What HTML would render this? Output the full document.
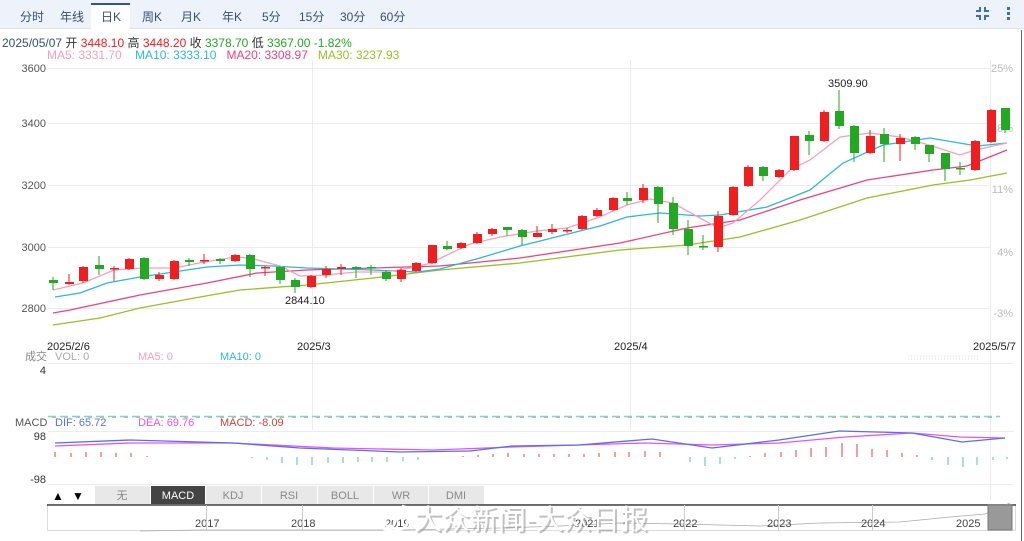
<!DOCTYPE html>
<html><head><meta charset="utf-8"><style>
*{margin:0;padding:0;box-sizing:border-box}
body{width:1024px;height:541px;overflow:hidden;background:#fff;font-family:"Liberation Sans","Noto Sans CJK SC",sans-serif;position:relative}
.bar{position:absolute;left:0;top:0;width:1024px;height:29px;background:#eef3fb;border-bottom:1px solid #dde4ee}
.t{position:absolute;top:8px;font-size:12px;color:#34507a}
.act{position:absolute;left:91px;top:3px;width:39px;height:27px;background:#fff;border-top:2px solid #2f5597}
.tx{position:absolute;font-size:12px;white-space:nowrap}
svg{position:absolute;left:0;top:0}
</style></head><body>
<div class="bar"></div>
<div class="act"></div>
<div class="t" style="left:20px">分时</div>
<div class="t" style="left:60px">年线</div>
<div class="t" style="left:101px">日K</div>
<div class="t" style="left:142px">周K</div>
<div class="t" style="left:181px">月K</div>
<div class="t" style="left:222px">年K</div>
<div class="t" style="left:262px">5分</div>
<div class="t" style="left:299px">15分</div>
<div class="t" style="left:340px">30分</div>
<div class="t" style="left:380px">60分</div>

<div class="tx" style="left:2px;top:34px;color:#34507a">2025/05/07 <span style="color:#333">开</span> <span style="color:#f01e1e">3448.10</span> <span style="color:#333">高</span> <span style="color:#f01e1e">3448.20</span> <span style="color:#333">收</span> <span style="color:#22a822">3378.70</span> <span style="color:#333">低</span> <span style="color:#22a822">3367.00 -1.82%</span></div>
<div class="tx" style="left:47px;top:48px;color:#f7a0b8">MA5: 3331.70 &nbsp; &nbsp;<span style="color:#2cb8dc">MA10: 3333.10</span> &nbsp; <span style="color:#f0437a">MA20: 3308.97</span> &nbsp; <span style="color:#9cbf22">MA30: 3237.93</span></div>

<svg width="1024" height="541" font-family="Liberation Sans, sans-serif">
<!-- top-right icons -->
<g fill="none" stroke="#3a6fc0" stroke-width="2">
<path d="M976 11 H980 V7"/><path d="M985 7 V11 H989"/><path d="M976 16 H980 V20"/><path d="M985 20 V16 H989"/>
</g>
<g fill="#3a6fc0"><rect x="1007" y="7" width="3" height="3"/><rect x="1007" y="12" width="3" height="3"/><rect x="1007" y="17" width="3" height="3"/></g>
<g stroke="#ececec" stroke-width="1">
<line x1="48" y1="68.5" x2="990" y2="68.5"/><line x1="48" y1="123.5" x2="990" y2="123.5"/><line x1="48" y1="185.5" x2="990" y2="185.5"/><line x1="48" y1="247.5" x2="990" y2="247.5"/><line x1="48" y1="308.5" x2="990" y2="308.5"/>
<line x1="312.5" y1="60" x2="312.5" y2="430"/><line x1="630.5" y1="60" x2="630.5" y2="430"/><line x1="990.5" y1="60" x2="990.5" y2="500"/>
<line x1="48" y1="363.5" x2="1014" y2="363.5"/><line x1="48" y1="431.5" x2="1014" y2="431.5"/><line x1="48" y1="484.5" x2="1014" y2="484.5"/>
</g>
<line x1="1021.5" y1="30" x2="1021.5" y2="541" stroke="#666"/>
<g font-size="11" fill="#555" text-anchor="end">
<text x="46" y="72">3600</text><text x="46" y="127">3400</text><text x="46" y="189">3200</text><text x="46" y="251">3000</text><text x="46" y="312">2800</text>
</g>
<g font-size="11" fill="#bbb" text-anchor="end">
<text x="1013" y="72">25%</text><text x="1013" y="132">18%</text><text x="1013" y="193">11%</text><text x="1013" y="256">4%</text><text x="1013" y="317">-3%</text>
</g>
<g font-size="11" fill="#222">
<text x="47" y="350">2025/2/6</text><text x="297" y="350">2025/3</text><text x="614" y="350">2025/4</text><text x="973" y="350">2025/5/7</text>
<text x="285" y="304">2844.10</text><text x="828" y="87">3509.90</text>
</g>
<g fill="none" stroke-width="1.3">
<polyline stroke="#9cbf22" points="53,325 100,318 140,308 200,297 240,290 307,285 373,278 440,270 520,263 620,250 687,245 740,237 800,220 867,198 933,185 970,180 1007,173"/>
<polyline stroke="#f0437a" points="53,313 70,310 140,295 207,283 257,273 307,270 373,268 440,266 520,258 620,243 687,228 740,220 800,200 867,180 933,170 967,166 1007,150"/>
<polyline stroke="#2cb8dc" points="55,297 80,293 107,283 140,277 207,267 240,265 273,266 307,268 373,270 417,272 440,269 480,258 520,246 560,236 600,226 627,217 660,213 700,216 720,215 767,207 810,190 843,163 883,145 930,138 977,146 1007,143"/>
<polyline stroke="#f7a0b8" points="53,290 83,283 114,270 144,268 174,268 204,262 235,257 250,258 280,266 300,276 326,275 356,272 386,272 416,267 431,263 447,255 470,244 500,237 537,231 567,228 597,218 627,205 650,199 673,203 700,218 718,228 733,223 760,200 790,170 810,160 840,137 870,133 900,137 929,145 960,155 975,150 1007,143"/>
</g>
<g stroke-width="1">
<line x1="53" y1="277" x2="53" y2="290" stroke="#22a822"/><rect x="49" y="280" width="9" height="3" fill="#22a822"/>
<line x1="69" y1="274" x2="69" y2="285" stroke="#f01e1e"/><rect x="65" y="282" width="9" height="2" fill="#f01e1e"/>
<line x1="83" y1="266" x2="83" y2="283" stroke="#f01e1e"/><rect x="79" y="267" width="9" height="14" fill="#f01e1e"/>
<line x1="99" y1="256" x2="99" y2="275" stroke="#22a822"/><rect x="95" y="265" width="9" height="4" fill="#22a822"/>
<line x1="114" y1="266" x2="114" y2="281" stroke="#f01e1e"/><rect x="110" y="268" width="9" height="1.5" fill="#f01e1e"/>
<line x1="129" y1="258" x2="129" y2="270" stroke="#f01e1e"/><rect x="125" y="259" width="9" height="10" fill="#f01e1e"/>
<line x1="144" y1="257" x2="144" y2="280" stroke="#22a822"/><rect x="140" y="258" width="9" height="21" fill="#22a822"/>
<line x1="159" y1="272" x2="159" y2="281" stroke="#f01e1e"/><rect x="155" y="275" width="9" height="4" fill="#f01e1e"/>
<line x1="174" y1="260" x2="174" y2="280" stroke="#f01e1e"/><rect x="170" y="261" width="9" height="18" fill="#f01e1e"/>
<line x1="189" y1="258" x2="189" y2="266" stroke="#22a822"/><rect x="185" y="260" width="9" height="2" fill="#22a822"/>
<line x1="204" y1="254" x2="204" y2="264" stroke="#f01e1e"/><rect x="200" y="260" width="9" height="1.5" fill="#f01e1e"/>
<line x1="220" y1="258" x2="220" y2="264" stroke="#22a822"/><rect x="216" y="259" width="9" height="2" fill="#22a822"/>
<line x1="235" y1="254" x2="235" y2="262" stroke="#f01e1e"/><rect x="231" y="255" width="9" height="6" fill="#f01e1e"/>
<line x1="250" y1="254" x2="250" y2="277" stroke="#22a822"/><rect x="246" y="255" width="9" height="14" fill="#22a822"/>
<line x1="265" y1="266" x2="265" y2="276" stroke="#f01e1e"/><rect x="261" y="267" width="9" height="1.5" fill="#f01e1e"/>
<line x1="280" y1="266" x2="280" y2="284" stroke="#22a822"/><rect x="276" y="267" width="9" height="13" fill="#22a822"/>
<line x1="295" y1="278" x2="295" y2="293" stroke="#22a822"/><rect x="291" y="280" width="9" height="7" fill="#22a822"/>
<line x1="311" y1="275" x2="311" y2="288" stroke="#f01e1e"/><rect x="307" y="276" width="9" height="11" fill="#f01e1e"/>
<line x1="326" y1="266" x2="326" y2="278" stroke="#f01e1e"/><rect x="322" y="269" width="9" height="6" fill="#f01e1e"/>
<line x1="341" y1="264" x2="341" y2="275" stroke="#f01e1e"/><rect x="337" y="267" width="9" height="2" fill="#f01e1e"/>
<line x1="356" y1="266" x2="356" y2="278" stroke="#22a822"/><rect x="352" y="267" width="9" height="2" fill="#22a822"/>
<line x1="371" y1="265" x2="371" y2="275" stroke="#22a822"/><rect x="367" y="267" width="9" height="1.5" fill="#22a822"/>
<line x1="386" y1="270" x2="386" y2="281" stroke="#22a822"/><rect x="382" y="272" width="9" height="7" fill="#22a822"/>
<line x1="401" y1="268" x2="401" y2="282" stroke="#f01e1e"/><rect x="397" y="270" width="9" height="9" fill="#f01e1e"/>
<line x1="416" y1="262" x2="416" y2="272" stroke="#f01e1e"/><rect x="412" y="263" width="9" height="8" fill="#f01e1e"/>
<line x1="432" y1="245" x2="432" y2="264" stroke="#f01e1e"/><rect x="428" y="245" width="9" height="18" fill="#f01e1e"/>
<line x1="447" y1="241" x2="447" y2="250" stroke="#22a822"/><rect x="443" y="246" width="9" height="3" fill="#22a822"/>
<line x1="461" y1="242" x2="461" y2="249" stroke="#f01e1e"/><rect x="457" y="243" width="9" height="5" fill="#f01e1e"/>
<line x1="477" y1="232" x2="477" y2="244" stroke="#f01e1e"/><rect x="473" y="234" width="9" height="9" fill="#f01e1e"/>
<line x1="492" y1="228" x2="492" y2="236" stroke="#f01e1e"/><rect x="488" y="229" width="9" height="5" fill="#f01e1e"/>
<line x1="507" y1="227" x2="507" y2="236" stroke="#22a822"/><rect x="503" y="227" width="9" height="3" fill="#22a822"/>
<line x1="522" y1="229" x2="522" y2="245" stroke="#22a822"/><rect x="518" y="230" width="9" height="7" fill="#22a822"/>
<line x1="537" y1="226" x2="537" y2="237" stroke="#f01e1e"/><rect x="533" y="233" width="9" height="4" fill="#f01e1e"/>
<line x1="552" y1="224" x2="552" y2="234" stroke="#f01e1e"/><rect x="548" y="229" width="9" height="3" fill="#f01e1e"/>
<line x1="567" y1="228" x2="567" y2="233" stroke="#f01e1e"/><rect x="563" y="230" width="9" height="1.5" fill="#f01e1e"/>
<line x1="582" y1="215" x2="582" y2="230" stroke="#f01e1e"/><rect x="578" y="216" width="9" height="13" fill="#f01e1e"/>
<line x1="597" y1="208" x2="597" y2="217" stroke="#f01e1e"/><rect x="593" y="210" width="9" height="6" fill="#f01e1e"/>
<line x1="613" y1="197" x2="613" y2="211" stroke="#f01e1e"/><rect x="609" y="198" width="9" height="12" fill="#f01e1e"/>
<line x1="627" y1="192" x2="627" y2="205" stroke="#22a822"/><rect x="623" y="198" width="9" height="3" fill="#22a822"/>
<line x1="643" y1="184" x2="643" y2="203" stroke="#f01e1e"/><rect x="639" y="188" width="9" height="12" fill="#f01e1e"/>
<line x1="658" y1="186" x2="658" y2="223" stroke="#22a822"/><rect x="654" y="187" width="9" height="17" fill="#22a822"/>
<line x1="673" y1="197" x2="673" y2="235" stroke="#22a822"/><rect x="669" y="203" width="9" height="26" fill="#22a822"/>
<line x1="688" y1="220" x2="688" y2="255" stroke="#22a822"/><rect x="684" y="229" width="9" height="17" fill="#22a822"/>
<line x1="703" y1="235" x2="703" y2="250" stroke="#22a822"/><rect x="699" y="246" width="9" height="1.5" fill="#22a822"/>
<line x1="718" y1="211" x2="718" y2="252" stroke="#f01e1e"/><rect x="714" y="216" width="9" height="31" fill="#f01e1e"/>
<line x1="733" y1="186" x2="733" y2="216" stroke="#f01e1e"/><rect x="729" y="187" width="9" height="28" fill="#f01e1e"/>
<line x1="748" y1="165" x2="748" y2="187" stroke="#f01e1e"/><rect x="744" y="167" width="9" height="19" fill="#f01e1e"/>
<line x1="763" y1="166" x2="763" y2="181" stroke="#22a822"/><rect x="759" y="167" width="9" height="9" fill="#22a822"/>
<line x1="779" y1="169" x2="779" y2="178" stroke="#f01e1e"/><rect x="775" y="170" width="9" height="7" fill="#f01e1e"/>
<line x1="794" y1="136" x2="794" y2="171" stroke="#f01e1e"/><rect x="790" y="136" width="9" height="34" fill="#f01e1e"/>
<line x1="809" y1="131" x2="809" y2="155" stroke="#22a822"/><rect x="805" y="135" width="9" height="6" fill="#22a822"/>
<line x1="824" y1="110" x2="824" y2="142" stroke="#f01e1e"/><rect x="820" y="112" width="9" height="29" fill="#f01e1e"/>
<line x1="839" y1="90" x2="839" y2="129" stroke="#22a822"/><rect x="835" y="111" width="9" height="15" fill="#22a822"/>
<line x1="854" y1="125" x2="854" y2="162" stroke="#22a822"/><rect x="850" y="126" width="9" height="27" fill="#22a822"/>
<line x1="870" y1="130" x2="870" y2="154" stroke="#f01e1e"/><rect x="866" y="136" width="9" height="17" fill="#f01e1e"/>
<line x1="884" y1="128" x2="884" y2="162" stroke="#22a822"/><rect x="880" y="134" width="9" height="10" fill="#22a822"/>
<line x1="900" y1="134" x2="900" y2="161" stroke="#f01e1e"/><rect x="896" y="138" width="9" height="6" fill="#f01e1e"/>
<line x1="915" y1="136" x2="915" y2="150" stroke="#22a822"/><rect x="911" y="137" width="9" height="7" fill="#22a822"/>
<line x1="929" y1="145" x2="929" y2="162" stroke="#22a822"/><rect x="925" y="145" width="9" height="9" fill="#22a822"/>
<line x1="945" y1="153" x2="945" y2="181" stroke="#22a822"/><rect x="941" y="153" width="9" height="16" fill="#22a822"/>
<line x1="960" y1="162" x2="960" y2="175" stroke="#22a822"/><rect x="956" y="168" width="9" height="1.5" fill="#22a822"/>
<line x1="975" y1="140" x2="975" y2="171" stroke="#f01e1e"/><rect x="971" y="141" width="9" height="29" fill="#f01e1e"/>
<line x1="991" y1="109" x2="991" y2="143" stroke="#f01e1e"/><rect x="987" y="110" width="9" height="32" fill="#f01e1e"/>
<line x1="1005" y1="108" x2="1005" y2="133" stroke="#22a822"/><rect x="1001" y="108" width="9" height="22" fill="#22a822"/>
</g>
<text x="25" y="360" font-size="11" fill="#888">成交</text>
<text x="55" y="360" font-size="11" fill="#aaa">VOL: 0</text>
<text x="138" y="360" font-size="11" fill="#f7a0b8">MA5: 0</text>
<text x="220" y="360" font-size="11" fill="#2cb8dc">MA10: 0</text>
<text x="46" y="374" font-size="11" fill="#333" text-anchor="end">4</text>
<line x1="48" y1="416.5" x2="1000" y2="416.5" stroke="#7fd6c8" stroke-width="1.5" stroke-dasharray="8,4"/>
<line x1="52" y1="417.5" x2="1000" y2="417.5" stroke="#aaa" stroke-width="0.8" stroke-dasharray="4,8"/>
<line x1="908" y1="356" x2="978" y2="356" stroke="#ddd" stroke-dasharray="1,2"/>
<line x1="908" y1="359" x2="978" y2="359" stroke="#ddd" stroke-dasharray="1,2"/>
<text x="15" y="426" font-size="11" fill="#555">MACD</text>
<text x="55" y="426" font-size="11" fill="#5470f0">DIF: 65.72</text>
<text x="138" y="426" font-size="11" fill="#f050f0">DEA: 69.76</text>
<text x="220" y="426" font-size="11" fill="#d04040">MACD: -8.09</text>
<text x="46" y="440" font-size="11" fill="#333" text-anchor="end">98</text>
<text x="46" y="483" font-size="11" fill="#333" text-anchor="end">-98</text>
<g stroke-width="1">
<g stroke="#e04040">
<line x1="55" y1="457" x2="55" y2="452"/><line x1="71" y1="457" x2="71" y2="453"/><line x1="86" y1="457" x2="86" y2="452"/><line x1="101" y1="457" x2="101" y2="452"/><line x1="116" y1="457" x2="116" y2="453"/><line x1="131" y1="457" x2="131" y2="453"/><line x1="147" y1="457" x2="147" y2="456"/>
<line x1="463" y1="457" x2="463" y2="456"/><line x1="478" y1="457" x2="478" y2="455"/><line x1="493" y1="457" x2="493" y2="454"/><line x1="508" y1="457" x2="508" y2="453"/><line x1="524" y1="457" x2="524" y2="454"/><line x1="539" y1="457" x2="539" y2="454"/><line x1="554" y1="457" x2="554" y2="454"/><line x1="569" y1="457" x2="569" y2="454"/><line x1="584" y1="457" x2="584" y2="454"/><line x1="599" y1="457" x2="599" y2="453"/><line x1="615" y1="457" x2="615" y2="452"/><line x1="629" y1="457" x2="629" y2="452"/><line x1="645" y1="457" x2="645" y2="451"/><line x1="660" y1="457" x2="660" y2="452"/>
<line x1="750" y1="457" x2="750" y2="456"/><line x1="765" y1="457" x2="765" y2="453"/><line x1="781" y1="457" x2="781" y2="452"/><line x1="796" y1="457" x2="796" y2="450"/><line x1="811" y1="457" x2="811" y2="448"/><line x1="826" y1="457" x2="826" y2="447"/><line x1="842" y1="457" x2="842" y2="443"/><line x1="857" y1="457" x2="857" y2="444"/><line x1="872" y1="457" x2="872" y2="449"/><line x1="887" y1="457" x2="887" y2="450"/><line x1="902" y1="457" x2="902" y2="453"/><line x1="917" y1="457" x2="917" y2="455"/>
</g>
<g stroke="#3ccf9a">
<line x1="252" y1="457" x2="252" y2="458"/><line x1="267" y1="457" x2="267" y2="460"/><line x1="282" y1="457" x2="282" y2="463"/><line x1="297" y1="457" x2="297" y2="465"/><line x1="312" y1="457" x2="312" y2="465"/><line x1="328" y1="457" x2="328" y2="463"/><line x1="343" y1="457" x2="343" y2="463"/><line x1="358" y1="457" x2="358" y2="462"/><line x1="372" y1="457" x2="372" y2="462"/><line x1="387" y1="457" x2="387" y2="462"/><line x1="403" y1="457" x2="403" y2="461"/><line x1="418" y1="457" x2="418" y2="460"/>
<line x1="690" y1="457" x2="690" y2="462"/><line x1="705" y1="457" x2="705" y2="466"/><line x1="720" y1="457" x2="720" y2="464"/><line x1="735" y1="457" x2="735" y2="459"/>
<line x1="932" y1="457" x2="932" y2="460"/><line x1="948" y1="457" x2="948" y2="465"/><line x1="963" y1="457" x2="963" y2="467"/><line x1="977" y1="457" x2="977" y2="465"/><line x1="993" y1="457" x2="993" y2="460"/><line x1="1007" y1="457" x2="1007" y2="459"/>
</g>
</g>
<polyline fill="none" stroke="#f050f0" stroke-width="1.3" points="55,446 130,443 233,443 333,448 433,450 512,447 645,443 712,445 779,443 845,437 912,433 960,437 1005,438"/>
<polyline fill="none" stroke="#5470f0" stroke-width="1.3" points="55,443 130,440 233,443 300,448 400,452 470,451 512,446 579,445 652,439 712,448 779,440 839,431 912,433 962,442 1005,438"/>
<rect x="48" y="486" width="46" height="18" fill="#fff"/>
<text x="52" y="500" font-size="12" fill="#000">▲</text><text x="72" y="500" font-size="12" fill="#000">▼</text>
<g font-size="11" fill="#888" text-anchor="middle">
<rect x="95" y="486" width="55" height="18" fill="#e8e8e8"/><text x="122" y="499">无</text>
<rect x="151" y="486" width="54" height="18" fill="#444"/><text x="178" y="499" fill="#fff">MACD</text>
<rect x="206" y="486" width="55" height="18" fill="#e8e8e8"/><text x="233" y="499">KDJ</text>
<rect x="262" y="486" width="55" height="18" fill="#e8e8e8"/><text x="289" y="499">RSI</text>
<rect x="318" y="486" width="55" height="18" fill="#e8e8e8"/><text x="345" y="499">BOLL</text>
<rect x="374" y="486" width="54" height="18" fill="#e8e8e8"/><text x="401" y="499">WR</text>
<rect x="429" y="486" width="55" height="18" fill="#e8e8e8"/><text x="456" y="499">DMI</text>
</g>
<rect x="47.5" y="504.5" width="968" height="26" fill="#fff" stroke="#ddd"/>
<line x1="47" y1="505" x2="1016" y2="505" stroke="#444" stroke-width="1.5"/>
<polyline fill="none" stroke="#aaa" stroke-width="0.8" points="140,531 200,530 300,530 400,530 500,528 560,526 620,523 680,524 760,526 820,523 900,522 950,517 985,514 1010,503"/>
<g font-size="11" fill="#444">
<text x="195" y="527">2017</text><text x="291" y="527">2018</text><text x="385" y="527">2019</text><text x="575" y="527">2021</text><text x="673" y="527">2022</text><text x="767" y="527">2023</text><text x="861" y="527">2024</text><text x="956" y="527">2025</text>
</g>
<g stroke="#ccc"><line x1="206.5" y1="505" x2="206.5" y2="531"/><line x1="302.5" y1="505" x2="302.5" y2="531"/><line x1="684.5" y1="505" x2="684.5" y2="531"/><line x1="778.5" y1="505" x2="778.5" y2="531"/><line x1="872.5" y1="505" x2="872.5" y2="531"/></g>
<rect x="988" y="505" width="24" height="25" fill="#999" stroke="#777"/>
<g fill="none" stroke="#fff" stroke-width="2.5"><ellipse cx="393" cy="521" rx="15" ry="10"/><circle cx="390" cy="522" r="5"/><path d="M402 506 a9 9 0 0 1 8 8"/></g>
<text x="416" y="531" font-size="28" fill="#999" opacity="0.6" font-family="Noto Sans CJK SC, sans-serif">大众新闻-大众日报</text>
<text x="414" y="529" font-size="28" fill="#fff" font-family="Noto Sans CJK SC, sans-serif">大众新闻-大众日报</text>
</svg>
</body></html>
